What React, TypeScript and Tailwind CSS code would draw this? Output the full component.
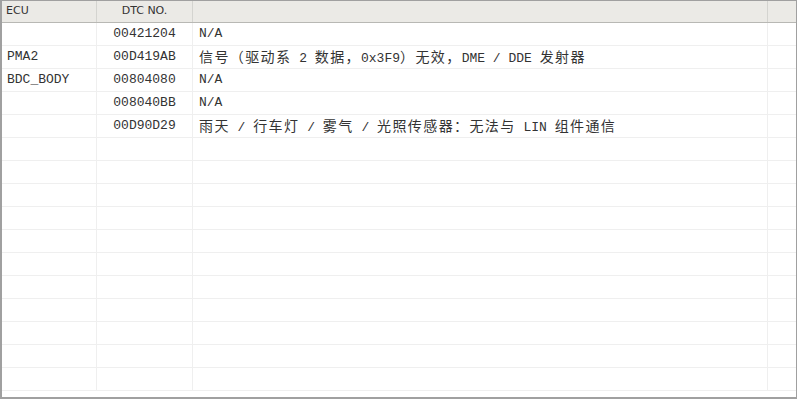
import React from "react";

const rows: [string, string, string][] = [
  ["", "00421204", "N/A"],
  ["PMA2", "00D419AB", "信号（驱动系 2 数据，0x3F9）无效，DME / DDE 发射器"],
  ["BDC_BODY", "00804080", "N/A"],
  ["", "008040BB", "N/A"],
  ["", "00D90D29", "雨天 / 行车灯 / 雾气 / 光照传感器：无法与 LIN 组件通信"],
];

const mono = { fontFamily: '"Liberation Mono", "Noto Sans CJK SC", monospace' };

function Mixed({ text }: { text: string }) {
  const parts = text.split(/([\u3000-\u303f\u4e00-\u9fff\uff00-\uffef]+)/);
  return (
    <>
      {parts.map((p, i) =>
        i % 2 === 1 ? (
          <span
            key={i}
            className="text-[14px] tracking-[1.4px]"
            style={{ fontFamily: '"Noto Sans CJK SC", sans-serif' }}
          >
            {p}
          </span>
        ) : (
          <span key={i} className="whitespace-pre">{p}</span>
        )
      )}
    </>
  );
}

export default function App() {
  const all: [string, string, string][] = [...rows];
  while (all.length < 16) all.push(["", "", ""]);
  return (
    <div className="w-[800px] h-[400px] bg-white overflow-hidden">
      <div className="w-[797px] h-[399px] border-l-2 border-t border-b-2 border-r border-[#a0a0a0] flex flex-col">
        <div
          className="h-[22px] flex bg-[#ebeae6] border-b border-[#b8b8b4] text-[11px] text-[#333]"
          style={{ fontFamily: '"DejaVu Sans", "Liberation Sans", sans-serif' }}
        >
          <div className="w-[95px] flex items-center pl-[4px] border-r border-[#d4d4d0]">ECU</div>
          <div className="w-[96px] flex items-center justify-center border-r border-[#d4d4d0]">DTC NO.</div>
          <div className="w-[575px] border-r border-[#d4d4d0]"></div>
          <div className="flex-1"></div>
        </div>
        <div className="flex-1 flex flex-col text-[13px] text-[#333]" style={mono}>
          {all.map((r, i) => (
            <div key={i} className="h-[23px] shrink-0 flex border-b border-[#efefef]">
              <div className="w-[95px] flex items-center pl-[5px] border-r border-[#efefef] whitespace-nowrap">{r[0]}</div>
              <div className="w-[96px] flex items-center justify-center border-r border-[#efefef] whitespace-nowrap">{r[1]}</div>
              <div className="w-[575px] flex items-center pl-[6px] border-r border-[#efefef] whitespace-nowrap">
                <span>
                  <Mixed text={r[2]} />
                </span>
              </div>
              <div className="flex-1"></div>
            </div>
          ))}
        </div>
      </div>
    </div>
  );
}
